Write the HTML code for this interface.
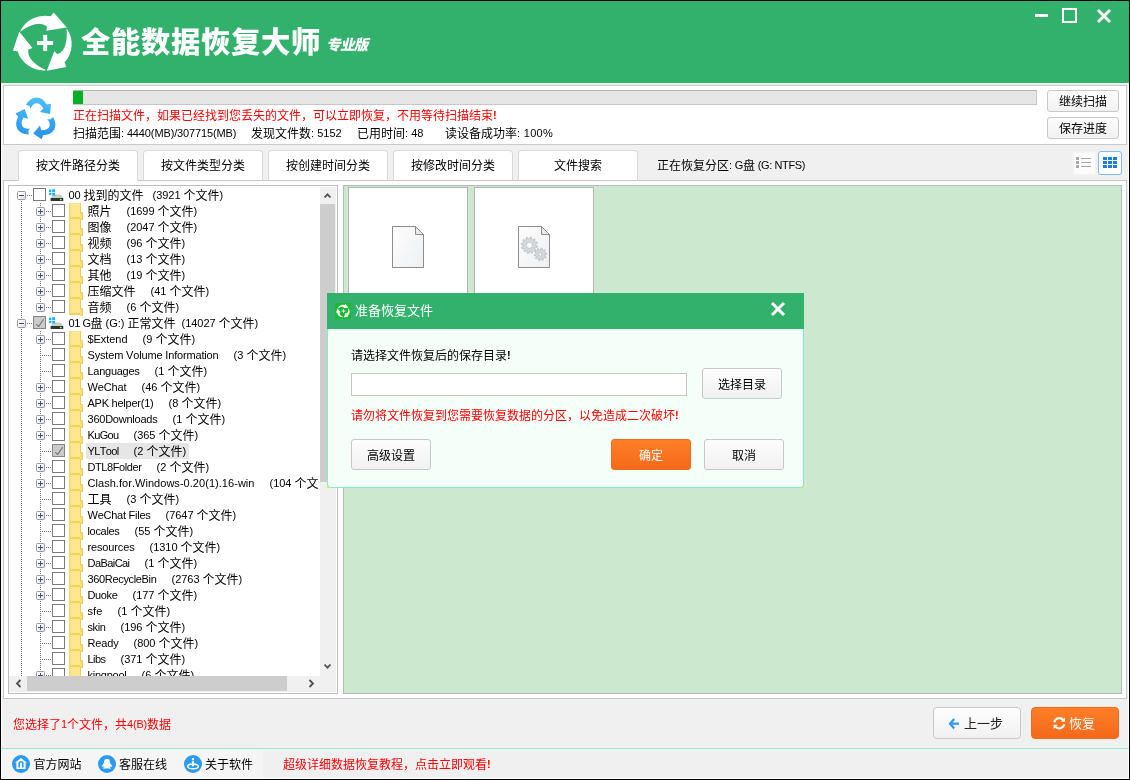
<!DOCTYPE html><html lang="zh-CN"><head><meta charset="utf-8"><title>全能数据恢复大师</title><style>
*{box-sizing:border-box;margin:0;padding:0}
html,body{width:1130px;height:780px;overflow:hidden;background:#f0f0f0}
body{position:relative;font-family:"Liberation Sans","Noto Sans CJK SC",sans-serif;font-size:12px;color:#000;line-height:1}
.abs,.abs>*{position:absolute}
#win{will-change:transform;position:absolute;left:0;top:0;width:1130px;height:780px;background:#f0f0f0;overflow:hidden}
#frame{position:absolute;left:0;top:0;width:1130px;height:780px;border:1px solid #000;z-index:50;pointer-events:none}
#frame2{position:absolute;left:1px;top:83px;width:1128px;height:696px;border:1px solid #fff;border-top:none;z-index:1;pointer-events:none}
#hdr{position:absolute;left:1px;top:1px;width:1128px;height:82px;background:#32b16c}
#title{position:absolute;left:80.5px;top:21.5px;height:42px;line-height:42px;font-size:29px;font-weight:900;color:#fff;white-space:nowrap;letter-spacing:0.7px;transform:scaleX(1.01);transform-origin:0 0;will-change:transform;opacity:.999}
#edition{position:absolute;left:326px;top:36px;height:18px;line-height:18px;font-size:14.5px;letter-spacing:-0.6px;font-weight:900;font-style:italic;color:#fff;white-space:nowrap}
#scan{position:absolute;left:3px;top:85px;width:1124px;height:60px;background:#fff;border:1px solid #c9c9c9}
#pbar{position:absolute;left:73px;top:90px;width:964px;height:15px;background:#e6e6e6;border:1px solid #c6c6c6;border-top-color:#b4b4b4}
#pfill{position:absolute;left:73px;top:91px;width:10px;height:13px;background:#06b025}
.t{position:absolute;white-space:pre;height:16px;line-height:16px;font-size:12px}
.red{color:#f00}
.l{font-size:11px;white-space:pre;font-kerning:none;font-variant-ligatures:none;position:relative;top:-1px;font-family:"Liberation Sans",sans-serif}
.btn{position:absolute;border:1px solid #c8c8c8;border-radius:3px;background:linear-gradient(#fdfdfd,#f1f1f1);text-align:center;font-size:12px;white-space:nowrap}
.tab{position:absolute;top:150px;width:120px;height:31px;border:1px solid #d9d9d9;border-radius:4px 4px 0 0;background:#fff;text-align:center;line-height:31px;font-size:12px;white-space:nowrap}
.tab{border-bottom-color:#c6c6c6}
.tab.sel{border-bottom-color:#fff}
#box{position:absolute;left:3px;top:180px;width:1124px;height:519px;background:#fff;border:1px solid #c6c6c6}
#tree{position:absolute;left:8px;top:185px;width:330px;height:509px;background:#fff;border:1px solid #bdbdbd;overflow:hidden}
#right{position:absolute;left:343px;top:185px;width:779px;height:509px;background:#cce8cf;border:1px solid #b3bdb5;overflow:hidden}
.tile{position:absolute;top:1px;width:120px;height:140px;background:#fff;border:1px solid #b4b4b4}
#sep{position:absolute;left:1px;top:748px;width:1128px;height:1px;background:#8df0d0;z-index:2}
#dlg{position:absolute;left:327px;top:293px;width:477px;height:195px;background:#f5fffa;border:1px solid #84ecca;border-top:none;border-radius:0 0 4px 4px;z-index:20}
#dlgt{position:absolute;left:327px;top:293px;width:477px;height:36px;background:#32b16c;z-index:21}
.z{z-index:22}
.orange{border:1px solid #f26a1b;background:linear-gradient(#ff7f27,#f4691a);color:#fff}
</style></head><body><div id="win">
<div id="hdr"></div>
<svg style="position:absolute;left:8px;top:8px" width="72" height="72" viewBox="-36.3 -35.4 72 72"><path transform="rotate(0)" d="M-24.3,-11.7 A27.5,27.5 0 0 1 6.5,-27.1 L9.4,-30.9 L22.5,-15.9 L1.9,-12.6 L2.8,-16.8 Q-6.05,-24.15 -24.3,-11.7 Z" fill="#fff"/><path transform="rotate(120)" d="M-24.3,-11.7 A27.5,27.5 0 0 1 6.5,-27.1 L9.4,-30.9 L22.5,-15.9 L1.9,-12.6 L2.8,-16.8 Q-6.05,-24.15 -24.3,-11.7 Z" fill="#fff"/><path transform="rotate(240)" d="M-24.3,-11.7 A27.5,27.5 0 0 1 6.5,-27.1 L9.4,-30.9 L22.5,-15.9 L1.9,-12.6 L2.8,-16.8 Q-6.05,-24.15 -24.3,-11.7 Z" fill="#fff"/><rect x="-7.2" y="-2.4" width="16" height="4" fill="#fff"/><rect x="-1.1" y="-8.5" width="4" height="16" fill="#fff"/></svg>
<div id="title">全能数据恢复大师</div><div id="edition">专业版</div>
<div style="position:absolute;left:1035px;top:14px;width:13px;height:3px;background:#fff"></div>
<div style="position:absolute;left:1062px;top:8px;width:15px;height:15px;border:2px solid #fff"></div>
<svg style="position:absolute;left:1096px;top:8px" width="16" height="16" viewBox="0 0 16 16"><path d="M2,2 L14,14 M14,2 L2,14" stroke="#fff" stroke-width="3" fill="none"/></svg>
<div id="scan"></div><div id="pbar"></div><div id="pfill"></div>
<svg style="position:absolute;left:12.1px;top:95px" width="48" height="48" viewBox="-23.6 -23.4 47.2 47.2"><defs><linearGradient id="rg" gradientUnits="userSpaceOnUse" x1="0" y1="-21" x2="0" y2="21"><stop offset="0" stop-color="#4bbff8"/><stop offset="1" stop-color="#2790eb"/></linearGradient></defs><path d="M-9.89,-13.75 Q-5.43,-20.82 0.52,-20.82 Q6.47,-20.82 10.56,-14.13 L14.65,-14.87 L13.90,-4.83 L3.87,-6.69 L7.21,-10.04 Q4.24,-15.24 0.52,-15.24 Q-3.20,-15.24 -5.43,-9.67 L-6.32,-12.49 Z" fill="url(#rg)"/><path d="M16.85,-1.69 Q20.75,5.71 17.77,10.86 Q14.80,16.01 6.96,16.21 L5.55,20.12 L-2.77,14.45 L3.86,6.70 L5.09,11.26 Q11.08,11.29 12.94,8.07 Q14.80,4.85 11.09,0.13 L13.98,0.77 Z" fill="url(#rg)"/><path d="M-6.96,15.44 Q-15.32,15.11 -18.29,9.96 Q-21.27,4.81 -17.52,-2.08 L-20.20,-5.25 L-11.13,-9.62 L-7.73,-0.01 L-12.30,-1.22 Q-15.32,3.95 -13.46,7.17 Q-11.60,10.39 -5.66,9.54 L-7.66,11.72 Z" fill="url(#rg)"/></svg>
<div class="t red" style="left:73px;top:108px">正在扫描文件，如果已经找到您丢失的文件，可以立即恢复，不用等待扫描结束<span class="l" style="font-weight:bold;letter-spacing:0.3px">!</span></div>
<div class="t" style="left:73px;top:126px">扫描范围<span class="l" style="letter-spacing:-0.126px">: 4440(MB)/307715(MB)     </span>发现文件数<span class="l" style="letter-spacing:0.012px">: 5152     </span>已用时间<span class="l" style="letter-spacing:0.024px">: 48       </span>读设备成功率<span class="l" style="letter-spacing:0.292px">: 100%</span></div>
<div class="btn" style="left:1047px;top:90px;width:72px;height:22px;line-height:22px">继续扫描</div>
<div class="btn" style="left:1047px;top:117px;width:72px;height:22px;line-height:22px">保存进度</div>
<div id="box"></div>
<div class="tab sel" style="left:18px">按文件路径分类</div>
<div class="tab" style="left:143px">按文件类型分类</div>
<div class="tab" style="left:268px">按创建时间分类</div>
<div class="tab" style="left:393px">按修改时间分类</div>
<div class="tab" style="left:518px">文件搜索</div>
<div class="t" style="left:657px;top:158px">正在恢复分区<span class="l" style="letter-spacing:-0.223px">: G</span>盘<span class="l" style="letter-spacing:-0.377px"> (G: NTFS)</span></div>
<div style="position:absolute;left:1073px;top:152px;width:23px;height:23px;background:#fbfbfb;border:1px solid #f4f4f4"></div>
<svg style="position:absolute;left:1076px;top:157px" width="16" height="12" viewBox="0 0 16 12"><rect x="0" y="0" width="3" height="3" fill="#a9a9a9"/><rect x="0" y="4" width="3" height="3" fill="#a9a9a9"/><rect x="0" y="8" width="3" height="3" fill="#a9a9a9"/><rect x="5" y="1" width="10" height="1" fill="#a9a9a9"/><rect x="5" y="5" width="10" height="1" fill="#a9a9a9"/><rect x="5" y="9" width="10" height="1" fill="#a9a9a9"/></svg>
<div style="position:absolute;left:1098px;top:151px;width:24px;height:24px;background:#fff;border:1px solid #7fbcf3;border-radius:3px"></div>
<svg style="position:absolute;left:1103px;top:157px" width="14" height="11" viewBox="0 0 14 11"><rect x="0" y="0" width="4" height="3" fill="#1b7fdc"/><rect x="5" y="0" width="4" height="3" fill="#1b7fdc"/><rect x="10" y="0" width="4" height="3" fill="#1b7fdc"/><rect x="0" y="4" width="4" height="3" fill="#1b7fdc"/><rect x="5" y="4" width="4" height="3" fill="#1b7fdc"/><rect x="10" y="4" width="4" height="3" fill="#1b7fdc"/><rect x="0" y="8" width="4" height="3" fill="#1b7fdc"/><rect x="5" y="8" width="4" height="3" fill="#1b7fdc"/><rect x="10" y="8" width="4" height="3" fill="#1b7fdc"/></svg>
<div id="tree"><div style="position:absolute;left:0;top:0;width:310px;height:490px;overflow:hidden"><style>.r{position:absolute;left:0;width:311px;height:16px}.cb{position:absolute;top:2px;width:13px;height:13px;border:1px solid #7a7a7a;background:#fff}.cb.g{background:#cbcbcb;border-color:#858585}.ex{position:absolute;top:5px;width:9px;height:9px;border:1px solid #9a9a9a;border-radius:1.5px;background:linear-gradient(135deg,#fff 25%,#dcdde6)}.ex i{position:absolute;left:1px;top:3px;width:5px;height:1px;background:#3a489c}.ex b{position:absolute;left:3px;top:1px;width:1px;height:5px;background:#3a489c}.fo{position:absolute;left:60px;top:1px;width:12px;height:16px;background:linear-gradient(90deg,#f3d056 0,#f6d970 1px,#fde690 2px,#fde791 10.5px,#f1cf52 11px,#f1cf52 12px);border-bottom:2px solid #f3d25c}.fo:after{content:"";position:absolute;left:11px;top:9px;width:1.6px;height:7px;background:#f9dd7a;border:1px solid #e8d050;border-left:none;border-bottom:none;border-radius:0 2px 0 0}.lb{position:absolute;top:2px;height:16px;line-height:16px;white-space:pre;font-size:12px}.hd{position:absolute;top:0;height:1px;background-image:linear-gradient(90deg,#6e6e6e 50%,transparent 50%);background-size:2px 1px}.vd{position:absolute;width:1px;background-image:linear-gradient(#6e6e6e 50%,transparent 50%);background-size:1px 2px}</style><div class="vd" style="left:12px;top:15px;height:500px"></div><div class="vd" style="left:31px;top:17px;height:100px"></div><div class="vd" style="left:31px;top:145px;height:400px"></div><div class="r" style="top:0px"><div class="hd" style="left:18px;top:9px;width:6px"></div><div class="ex" style="left:8px"><i></i></div><div class="cb" style="left:24px"></div><svg style="position:absolute;left:39.5px;top:3.3px" width="16" height="13" viewBox="0 0 16 13"><path d="M4.4,5.4 L12.2,5.4 L14.3,9 L1.6,9 Z" fill="#c9cbcd"/><rect x="1.6" y="9" width="12.7" height="3.1" rx="0.6" fill="#2d3630"/><rect x="10.8" y="9.9" width="1.8" height="1.3" fill="#7cf07c"/><rect x="0" y="0.6" width="2.3" height="2.4" fill="#0cb4f0"/><rect x="3.2" y="0.3" width="2.9" height="2.7" fill="#0cb4f0"/><rect x="0" y="3.8" width="2.3" height="2.3" fill="#0cb4f0"/><rect x="3.2" y="3.8" width="2.9" height="2.7" fill="#0cb4f0"/></svg><div class="lb" style="left:59.5px"><span class="l" style="letter-spacing:-0.097px">00 </span>找到的文件<span style="display:inline-block;width:9px"></span><span class="l" style="letter-spacing:-0.032px">(3921 </span>个文件<span class="l" style="letter-spacing:0.337px">)</span></div></div><div class="r" style="top:16px"><div class="hd" style="left:37px;top:9px;width:6px"></div><div class="ex" style="left:27px"><i></i><b></b></div><div class="cb" style="left:43px"></div><div class="fo"></div><div class="lb" style="left:78.5px">照片<span style="display:inline-block;width:15px"></span><span class="l" style="letter-spacing:-0.032px">(1699 </span>个文件<span class="l" style="letter-spacing:0.337px">)</span></div></div><div class="r" style="top:32px"><div class="hd" style="left:37px;top:9px;width:6px"></div><div class="ex" style="left:27px"><i></i><b></b></div><div class="cb" style="left:43px"></div><div class="fo"></div><div class="lb" style="left:78.5px">图像<span style="display:inline-block;width:15px"></span><span class="l" style="letter-spacing:-0.032px">(2047 </span>个文件<span class="l" style="letter-spacing:0.337px">)</span></div></div><div class="r" style="top:48px"><div class="hd" style="left:37px;top:9px;width:6px"></div><div class="ex" style="left:27px"><i></i><b></b></div><div class="cb" style="left:43px"></div><div class="fo"></div><div class="lb" style="left:78.5px">视频<span style="display:inline-block;width:15px"></span><span class="l" style="letter-spacing:0.011px">(96 </span>个文件<span class="l" style="letter-spacing:0.337px">)</span></div></div><div class="r" style="top:64px"><div class="hd" style="left:37px;top:9px;width:6px"></div><div class="ex" style="left:27px"><i></i><b></b></div><div class="cb" style="left:43px"></div><div class="fo"></div><div class="lb" style="left:78.5px">文档<span style="display:inline-block;width:15px"></span><span class="l" style="letter-spacing:0.011px">(13 </span>个文件<span class="l" style="letter-spacing:0.337px">)</span></div></div><div class="r" style="top:80px"><div class="hd" style="left:37px;top:9px;width:6px"></div><div class="ex" style="left:27px"><i></i><b></b></div><div class="cb" style="left:43px"></div><div class="fo"></div><div class="lb" style="left:78.5px">其他<span style="display:inline-block;width:15px"></span><span class="l" style="letter-spacing:0.011px">(19 </span>个文件<span class="l" style="letter-spacing:0.337px">)</span></div></div><div class="r" style="top:96px"><div class="hd" style="left:37px;top:9px;width:6px"></div><div class="ex" style="left:27px"><i></i><b></b></div><div class="cb" style="left:43px"></div><div class="fo"></div><div class="lb" style="left:78.5px">压缩文件<span style="display:inline-block;width:15px"></span><span class="l" style="letter-spacing:0.011px">(41 </span>个文件<span class="l" style="letter-spacing:0.337px">)</span></div></div><div class="r" style="top:112px"><div class="hd" style="left:37px;top:9px;width:6px"></div><div class="ex" style="left:27px"><i></i><b></b></div><div class="cb" style="left:43px"></div><div class="fo"></div><div class="lb" style="left:78.5px">音频<span style="display:inline-block;width:15px"></span><span class="l" style="letter-spacing:0.054px">(6 </span>个文件<span class="l" style="letter-spacing:0.337px">)</span></div></div><div class="r" style="top:128px"><div class="hd" style="left:18px;top:9px;width:6px"></div><div class="ex" style="left:8px"><i></i></div><div class="cb g" style="left:24px"><svg style="position:absolute;left:-1px;top:-1px" width="13" height="13" viewBox="0 0 13 13"><path d="M3.2,8.2 L5.7,10.4 L10.6,3.3" fill="none" stroke="#767676" stroke-width="1.1"/></svg></div><svg style="position:absolute;left:39.5px;top:3.3px" width="16" height="13" viewBox="0 0 16 13"><path d="M4.4,5.4 L12.2,5.4 L14.3,9 L1.6,9 Z" fill="#c9cbcd"/><rect x="1.6" y="9" width="12.7" height="3.1" rx="0.6" fill="#2d3630"/><rect x="10.8" y="9.9" width="1.8" height="1.3" fill="#7cf07c"/><rect x="0" y="0.6" width="2.3" height="2.4" fill="#0cb4f0"/><rect x="3.2" y="0.3" width="2.9" height="2.7" fill="#0cb4f0"/><rect x="0" y="3.8" width="2.3" height="2.3" fill="#0cb4f0"/><rect x="3.2" y="3.8" width="2.9" height="2.7" fill="#0cb4f0"/></svg><div class="lb" style="left:59.5px"><span class="l" style="letter-spacing:-0.462px">01 G</span>盘<span class="l" style="letter-spacing:-0.008px"> (G:) </span>正常文件<span style="display:inline-block;width:6px"></span><span class="l" style="letter-spacing:-0.044px">(14027 </span>个文件<span class="l" style="letter-spacing:0.337px">)</span></div></div><div class="r" style="top:144px"><div class="hd" style="left:37px;top:9px;width:6px"></div><div class="ex" style="left:27px"><i></i><b></b></div><div class="cb" style="left:43px"></div><div class="fo"></div><div class="lb" style="left:78.5px"><span class="l" style="letter-spacing:-0.052px">$Extend</span><span style="display:inline-block;width:15px"></span><span class="l" style="letter-spacing:0.054px">(9 </span>个文件<span class="l" style="letter-spacing:0.337px">)</span></div></div><div class="r" style="top:160px"><div class="hd" style="left:33px;top:9px;width:10px"></div><div class="cb" style="left:43px"></div><div class="fo"></div><div class="lb" style="left:78.5px"><span class="l" style="letter-spacing:-0.164px">System Volume Information</span><span style="display:inline-block;width:15px"></span><span class="l" style="letter-spacing:0.054px">(3 </span>个文件<span class="l" style="letter-spacing:0.337px">)</span></div></div><div class="r" style="top:176px"><div class="hd" style="left:33px;top:9px;width:10px"></div><div class="cb" style="left:43px"></div><div class="fo"></div><div class="lb" style="left:78.5px"><span class="l" style="letter-spacing:-0.271px">Languages</span><span style="display:inline-block;width:15px"></span><span class="l" style="letter-spacing:0.054px">(1 </span>个文件<span class="l" style="letter-spacing:0.337px">)</span></div></div><div class="r" style="top:192px"><div class="hd" style="left:37px;top:9px;width:6px"></div><div class="ex" style="left:27px"><i></i><b></b></div><div class="cb" style="left:43px"></div><div class="fo"></div><div class="lb" style="left:78.5px"><span class="l" style="letter-spacing:-0.123px">WeChat</span><span style="display:inline-block;width:15px"></span><span class="l" style="letter-spacing:0.011px">(46 </span>个文件<span class="l" style="letter-spacing:0.337px">)</span></div></div><div class="r" style="top:208px"><div class="hd" style="left:37px;top:9px;width:6px"></div><div class="ex" style="left:27px"><i></i><b></b></div><div class="cb" style="left:43px"></div><div class="fo"></div><div class="lb" style="left:78.5px"><span class="l" style="letter-spacing:-0.238px">APK helper(1)</span><span style="display:inline-block;width:15px"></span><span class="l" style="letter-spacing:0.054px">(8 </span>个文件<span class="l" style="letter-spacing:0.337px">)</span></div></div><div class="r" style="top:224px"><div class="hd" style="left:37px;top:9px;width:6px"></div><div class="ex" style="left:27px"><i></i><b></b></div><div class="cb" style="left:43px"></div><div class="fo"></div><div class="lb" style="left:78.5px"><span class="l" style="letter-spacing:-0.231px">360Downloads</span><span style="display:inline-block;width:15px"></span><span class="l" style="letter-spacing:0.054px">(1 </span>个文件<span class="l" style="letter-spacing:0.337px">)</span></div></div><div class="r" style="top:240px"><div class="hd" style="left:37px;top:9px;width:6px"></div><div class="ex" style="left:27px"><i></i><b></b></div><div class="cb" style="left:43px"></div><div class="fo"></div><div class="lb" style="left:78.5px"><span class="l" style="letter-spacing:-0.649px">KuGou</span><span style="display:inline-block;width:15px"></span><span class="l" style="letter-spacing:-0.014px">(365 </span>个文件<span class="l" style="letter-spacing:0.337px">)</span></div></div><div class="r" style="top:256px"><div class="hd" style="left:33px;top:9px;width:10px"></div><div class="cb g" style="left:43px"><svg style="position:absolute;left:-1px;top:-1px" width="13" height="13" viewBox="0 0 13 13"><path d="M3.2,8.2 L5.7,10.4 L10.6,3.3" fill="none" stroke="#767676" stroke-width="1.1"/></svg></div><div class="fo"></div><div style="position:absolute;left:77px;top:1px;width:103px;height:16px;background:#e6e6e6"></div><div class="lb" style="left:78.5px"><span class="l" style="letter-spacing:-0.642px">YLTool</span><span style="display:inline-block;width:15px"></span><span class="l" style="letter-spacing:0.054px">(2 </span>个文件<span class="l" style="letter-spacing:0.337px">)</span></div></div><div class="r" style="top:272px"><div class="hd" style="left:37px;top:9px;width:6px"></div><div class="ex" style="left:27px"><i></i><b></b></div><div class="cb" style="left:43px"></div><div class="fo"></div><div class="lb" style="left:78.5px"><span class="l" style="letter-spacing:-0.408px">DTL8Folder</span><span style="display:inline-block;width:15px"></span><span class="l" style="letter-spacing:0.054px">(2 </span>个文件<span class="l" style="letter-spacing:0.337px">)</span></div></div><div class="r" style="top:288px"><div class="hd" style="left:37px;top:9px;width:6px"></div><div class="ex" style="left:27px"><i></i><b></b></div><div class="cb" style="left:43px"></div><div class="fo"></div><div class="lb" style="left:78.5px"><span class="l" style="letter-spacing:0.042px">Clash.for.Windows-0.20(1).16-win</span><span style="display:inline-block;width:15px"></span><span class="l" style="letter-spacing:-0.014px">(104 </span>个文件<span class="l" style="letter-spacing:0.337px">)</span></div></div><div class="r" style="top:304px"><div class="hd" style="left:33px;top:9px;width:10px"></div><div class="cb" style="left:43px"></div><div class="fo"></div><div class="lb" style="left:78.5px">工具<span style="display:inline-block;width:15px"></span><span class="l" style="letter-spacing:0.054px">(3 </span>个文件<span class="l" style="letter-spacing:0.337px">)</span></div></div><div class="r" style="top:320px"><div class="hd" style="left:37px;top:9px;width:6px"></div><div class="ex" style="left:27px"><i></i><b></b></div><div class="cb" style="left:43px"></div><div class="fo"></div><div class="lb" style="left:78.5px"><span class="l" style="letter-spacing:-0.251px">WeChat Files</span><span style="display:inline-block;width:15px"></span><span class="l" style="letter-spacing:-0.032px">(7647 </span>个文件<span class="l" style="letter-spacing:0.337px">)</span></div></div><div class="r" style="top:336px"><div class="hd" style="left:33px;top:9px;width:10px"></div><div class="cb" style="left:43px"></div><div class="fo"></div><div class="lb" style="left:78.5px"><span class="l" style="letter-spacing:-0.320px">locales</span><span style="display:inline-block;width:15px"></span><span class="l" style="letter-spacing:0.011px">(55 </span>个文件<span class="l" style="letter-spacing:0.337px">)</span></div></div><div class="r" style="top:352px"><div class="hd" style="left:37px;top:9px;width:6px"></div><div class="ex" style="left:27px"><i></i><b></b></div><div class="cb" style="left:43px"></div><div class="fo"></div><div class="lb" style="left:78.5px"><span class="l" style="letter-spacing:-0.144px">resources</span><span style="display:inline-block;width:15px"></span><span class="l" style="letter-spacing:-0.032px">(1310 </span>个文件<span class="l" style="letter-spacing:0.337px">)</span></div></div><div class="r" style="top:368px"><div class="hd" style="left:37px;top:9px;width:6px"></div><div class="ex" style="left:27px"><i></i><b></b></div><div class="cb" style="left:43px"></div><div class="fo"></div><div class="lb" style="left:78.5px"><span class="l" style="letter-spacing:-0.558px">DaBaiCai</span><span style="display:inline-block;width:15px"></span><span class="l" style="letter-spacing:0.054px">(1 </span>个文件<span class="l" style="letter-spacing:0.337px">)</span></div></div><div class="r" style="top:384px"><div class="hd" style="left:37px;top:9px;width:6px"></div><div class="ex" style="left:27px"><i></i><b></b></div><div class="cb" style="left:43px"></div><div class="fo"></div><div class="lb" style="left:78.5px"><span class="l" style="letter-spacing:-0.337px">360RecycleBin</span><span style="display:inline-block;width:15px"></span><span class="l" style="letter-spacing:-0.032px">(2763 </span>个文件<span class="l" style="letter-spacing:0.337px">)</span></div></div><div class="r" style="top:400px"><div class="hd" style="left:37px;top:9px;width:6px"></div><div class="ex" style="left:27px"><i></i><b></b></div><div class="cb" style="left:43px"></div><div class="fo"></div><div class="lb" style="left:78.5px"><span class="l" style="letter-spacing:-0.359px">Duoke</span><span style="display:inline-block;width:15px"></span><span class="l" style="letter-spacing:-0.014px">(177 </span>个文件<span class="l" style="letter-spacing:0.337px">)</span></div></div><div class="r" style="top:416px"><div class="hd" style="left:33px;top:9px;width:10px"></div><div class="cb" style="left:43px"></div><div class="fo"></div><div class="lb" style="left:78.5px"><span class="l" style="letter-spacing:0.109px">sfe</span><span style="display:inline-block;width:15px"></span><span class="l" style="letter-spacing:0.054px">(1 </span>个文件<span class="l" style="letter-spacing:0.337px">)</span></div></div><div class="r" style="top:432px"><div class="hd" style="left:37px;top:9px;width:6px"></div><div class="ex" style="left:27px"><i></i><b></b></div><div class="cb" style="left:43px"></div><div class="fo"></div><div class="lb" style="left:78.5px"><span class="l" style="letter-spacing:-0.390px">skin</span><span style="display:inline-block;width:15px"></span><span class="l" style="letter-spacing:-0.014px">(196 </span>个文件<span class="l" style="letter-spacing:0.337px">)</span></div></div><div class="r" style="top:448px"><div class="hd" style="left:33px;top:9px;width:10px"></div><div class="cb" style="left:43px"></div><div class="fo"></div><div class="lb" style="left:78.5px"><span class="l" style="letter-spacing:-0.159px">Ready</span><span style="display:inline-block;width:15px"></span><span class="l" style="letter-spacing:-0.014px">(800 </span>个文件<span class="l" style="letter-spacing:0.337px">)</span></div></div><div class="r" style="top:464px"><div class="hd" style="left:33px;top:9px;width:10px"></div><div class="cb" style="left:43px"></div><div class="fo"></div><div class="lb" style="left:78.5px"><span class="l" style="letter-spacing:-0.545px">Libs</span><span style="display:inline-block;width:15px"></span><span class="l" style="letter-spacing:-0.014px">(371 </span>个文件<span class="l" style="letter-spacing:0.337px">)</span></div></div><div class="r" style="top:480px"><div class="hd" style="left:37px;top:9px;width:6px"></div><div class="ex" style="left:27px"><i></i><b></b></div><div class="cb" style="left:43px"></div><div class="fo"></div><div class="lb" style="left:78.5px"><span class="l" style="letter-spacing:-0.247px">kingpool</span><span style="display:inline-block;width:15px"></span><span class="l" style="letter-spacing:0.054px">(6 </span>个文件<span class="l" style="letter-spacing:0.337px">)</span></div></div></div>
<div style="position:absolute;left:311px;top:1px;width:16px;height:505px;background:#f0f0f0"></div>
<div style="position:absolute;left:311px;top:18px;width:15px;height:278px;background:#cdcdcd"></div>
<svg style="position:absolute;left:314px;top:6px" width="9" height="7" viewBox="0 0 9 7"><path d="M1.5,5.5 L4.5,2.3 L7.5,5.5" fill="none" stroke="#505050" stroke-width="1.8"/></svg>
<svg style="position:absolute;left:314px;top:477px" width="9" height="7" viewBox="0 0 9 7"><path d="M1.5,1.5 L4.5,4.7 L7.5,1.5" fill="none" stroke="#505050" stroke-width="1.8"/></svg>
<div style="position:absolute;left:0;top:490px;width:327px;height:16px;background:#f0f0f0"></div>
<div style="position:absolute;left:18px;top:490px;width:260px;height:15px;background:#cdcdcd"></div>
<svg style="position:absolute;left:5.5px;top:493px" width="7" height="9" viewBox="0 0 7 9"><path d="M5.5,1 L2,4.5 L5.5,8" fill="none" stroke="#505050" stroke-width="1.8"/></svg>
<svg style="position:absolute;left:298.5px;top:493px" width="7" height="9" viewBox="0 0 7 9"><path d="M1.5,1 L5,4.5 L1.5,8" fill="none" stroke="#505050" stroke-width="1.8"/></svg>
</div>
<div id="right"><div class="tile" style="left:4px"></div><div class="tile" style="left:130px"></div><svg style="position:absolute;left:48px;top:40px" width="32" height="42" viewBox="0 0 32 42"><defs><linearGradient id="pga" x1="0" y1="0" x2="1" y2="1"><stop offset="0" stop-color="#fdfdfd"/><stop offset="1" stop-color="#eff0f2"/></linearGradient></defs><path d="M0.5,0.5 L23.5,0.5 L31.5,8.5 L31.5,41.5 L0.5,41.5 Z" fill="url(#pga)" stroke="#8d8d8d"/><path d="M23.5,0.5 L23.5,8.5 L31.5,8.5 Z" fill="#e9e9e9" stroke="#8d8d8d" stroke-linejoin="round"/></svg><svg style="position:absolute;left:174px;top:40px" width="32" height="42" viewBox="0 0 32 42"><defs><linearGradient id="pgb" x1="0" y1="0" x2="1" y2="1"><stop offset="0" stop-color="#fdfdfd"/><stop offset="1" stop-color="#eff0f2"/></linearGradient></defs><path d="M0.5,0.5 L23.5,0.5 L31.5,8.5 L31.5,41.5 L0.5,41.5 Z" fill="url(#pgb)" stroke="#8d8d8d"/><path d="M23.5,0.5 L23.5,8.5 L31.5,8.5 Z" fill="#e9e9e9" stroke="#8d8d8d" stroke-linejoin="round"/><path d="M17.80,19.30 L19.66,20.08 L19.42,21.45 L17.40,21.53 L16.94,22.50 L18.17,24.11 L17.27,25.17 L15.48,24.23 L14.60,24.84 L14.86,26.85 L13.55,27.32 L12.47,25.61 L11.40,25.70 L10.62,27.56 L9.25,27.32 L9.17,25.30 L8.20,24.84 L6.59,26.07 L5.53,25.17 L6.47,23.38 L5.86,22.50 L3.85,22.76 L3.38,21.45 L5.09,20.37 L5.00,19.30 L3.14,18.52 L3.38,17.15 L5.40,17.07 L5.86,16.10 L4.63,14.49 L5.53,13.43 L7.32,14.37 L8.20,13.76 L7.94,11.75 L9.25,11.28 L10.33,12.99 L11.40,12.90 L12.18,11.04 L13.55,11.28 L13.63,13.30 L14.60,13.76 L16.21,12.53 L17.27,13.43 L16.33,15.22 L16.94,16.10 L18.95,15.84 L19.42,17.15 L17.71,18.23 Z" fill="#d3d8dc" stroke="#b4bbc1" stroke-width="0.7"/><circle cx="11.4" cy="19.3" r="3" fill="#fbfbfc" stroke="#b4bbc1" stroke-width="0.7"/><path d="M26.79,29.76 L28.17,30.93 L27.55,32.03 L25.84,31.46 L25.16,32.08 L25.58,33.84 L24.43,34.36 L23.38,32.89 L22.47,33.00 L21.78,34.67 L20.54,34.42 L20.55,32.61 L19.75,32.16 L18.21,33.11 L17.36,32.17 L18.43,30.72 L18.05,29.88 L16.25,29.75 L16.10,28.49 L17.82,27.95 L18.01,27.04 L16.63,25.87 L17.25,24.77 L18.96,25.34 L19.64,24.72 L19.22,22.96 L20.37,22.44 L21.42,23.91 L22.33,23.80 L23.02,22.13 L24.26,22.38 L24.25,24.19 L25.05,24.64 L26.59,23.69 L27.44,24.63 L26.37,26.08 L26.75,26.92 L28.55,27.05 L28.70,28.31 L26.98,28.85 Z" fill="#d3d8dc" stroke="#b4bbc1" stroke-width="0.7"/><circle cx="22.4" cy="28.4" r="1.5" fill="#fbfbfc" stroke="#b4bbc1" stroke-width="0.7"/></svg></div>
<div class="t red" style="left:13px;top:717px">您选择了<span class="l" style="letter-spacing:-0.118px">1</span>个文件，共<span class="l" style="letter-spacing:-0.195px">4(B)</span>数据</div>
<div class="btn" style="left:933px;top:707px;width:88px;height:32px;line-height:32px;font-size:13px;text-align:left;padding-left:30px;color:#222;border-radius:4px">上一步</div>
<svg style="position:absolute;left:948px;top:717px" width="12" height="13" viewBox="0 0 12 13"><path d="M6.2,2 L2,6.7 L6.2,11.4 M2.5,6.7 L11,6.7" fill="none" stroke="#2d9bf0" stroke-width="2.2"/></svg>
<div class="btn orange" style="left:1031px;top:707px;width:88px;height:32px;line-height:32px;font-size:13px;text-align:left;padding-left:37px;border-radius:4px">恢复</div>
<svg style="position:absolute;left:1051.8px;top:716.4px" width="14.6" height="14.6" viewBox="0 0 14 14"><path d="M2.2,6 A5,5 0 0 1 11,4" fill="none" stroke="#fff" stroke-width="2"/><path d="M11.8,8 A5,5 0 0 1 3,10" fill="none" stroke="#fff" stroke-width="2"/><path d="M12.5,1.5 L12.5,5.5 L8.5,5.5 Z" fill="#fff"/><path d="M1.5,12.5 L1.5,8.5 L5.5,8.5 Z" fill="#fff"/></svg>
<div id="sep"></div>
<div style="position:absolute;left:2px;top:750px;width:261px;height:28px;background:#f5f5f5"></div><svg style="position:absolute;left:12px;top:755px" width="18" height="18" viewBox="-9 -9 18 18"><circle r="9" fill="#2b9af3"/><path d="M0,-6.1 L6,-1.3 L4.6,-1.3 L4.6,4.9 L-4.6,4.9 L-4.6,-1.3 L-6,-1.3 Z" fill="#fff"/><path d="M-2.6,3.4 L-2.6,-0.4 A2.6,2.6 0 0 1 2.6,-0.4 L2.6,3.4 L1,3.4 L1,-0.4 A1,1 0 0 0 -1,-0.4 L-1,3.4 Z" fill="#2b9af3"/></svg><div class="t" style="left:33.5px;top:757px">官方网站</div><svg style="position:absolute;left:98px;top:755px" width="18" height="18" viewBox="-9 -9 18 18"><circle r="9" fill="#2b9af3"/><path d="M0,-5.2 C-2.4,-5.2 -3.1,-3 -3.1,-1.2 C-3.6,0 -5.2,1.4 -5.3,3 L-3.3,2.2 L-3.6,4.9 L-0.6,4.3 L0,4.9 L0.6,4.3 L3.6,4.9 L3.3,2.2 L5.3,3 C5.2,1.4 3.6,0 3.1,-1.2 C3.1,-3 2.4,-5.2 0,-5.2 Z" fill="#f2f8fe"/></svg><div class="t" style="left:119px;top:757px">客服在线</div><svg style="position:absolute;left:184px;top:755px" width="18" height="18" viewBox="-9 -9 18 18"><circle r="9" fill="#2b9af3"/><rect x="-1.1" y="-6" width="2.2" height="2.2" fill="#fff"/><rect x="-1.1" y="-2.9" width="2.2" height="5.2" fill="#fff"/><ellipse cx="0" cy="2.4" rx="5.3" ry="2.3" fill="none" stroke="#fff" stroke-width="1.5"/><rect x="-1.1" y="-0.5" width="2.2" height="2.5" fill="#fff"/></svg><div class="t" style="left:205px;top:757px">关于软件</div><div class="t red" style="left:283px;top:757px">超级详细数据恢复教程，点击立即观看<span class="l" style="font-weight:bold;letter-spacing:0.3px">!</span></div>
<div style="position:absolute;left:327px;top:486px;width:2px;height:2px;background:#f4f000;z-index:19"></div><div style="position:absolute;left:802px;top:486px;width:2px;height:2px;background:#f4f000;z-index:19"></div>
<div id="dlg"></div><div id="dlgt"></div>
<div class="z" style="position:absolute;left:335px;top:303px;width:16px;height:16px;background:#1bb834"></div>
<svg class="z" style="position:absolute;left:336.0px;top:304.2px" width="13.6" height="13.6" viewBox="-31.6 -31.2 59.4 59.4"><path transform="rotate(0)" d="M-24.3,-11.7 A27.5,27.5 0 0 1 6.5,-27.1 L9.4,-30.9 L22.5,-15.9 L1.9,-12.6 L2.8,-16.8 Q-6.05,-24.15 -24.3,-11.7 Z" fill="#fff"/><path transform="rotate(120)" d="M-24.3,-11.7 A27.5,27.5 0 0 1 6.5,-27.1 L9.4,-30.9 L22.5,-15.9 L1.9,-12.6 L2.8,-16.8 Q-6.05,-24.15 -24.3,-11.7 Z" fill="#fff"/><path transform="rotate(240)" d="M-24.3,-11.7 A27.5,27.5 0 0 1 6.5,-27.1 L9.4,-30.9 L22.5,-15.9 L1.9,-12.6 L2.8,-16.8 Q-6.05,-24.15 -24.3,-11.7 Z" fill="#fff"/><rect x="-7.2" y="-2.4" width="16" height="4" fill="#fff"/><rect x="-1.1" y="-8.5" width="4" height="16" fill="#fff"/></svg>
<div class="t z" style="left:355px;top:303px;color:#fff;font-size:13px">准备恢复文件</div>
<svg class="z" style="position:absolute;left:770px;top:301px" width="16" height="16" viewBox="0 0 16 16"><path d="M2,2 L14,14 M14,2 L2,14" stroke="#fff" stroke-width="3" fill="none"/></svg>
<div class="t z" style="left:351px;top:348px">请选择文件恢复后的保存目录<span class="l" style="font-weight:bold;letter-spacing:0.3px">!</span></div>
<div class="z" style="position:absolute;left:351px;top:373px;width:336px;height:23px;background:#fff;border:1px solid #c4c4c4"></div>
<div class="btn z" style="left:702px;top:368px;width:80px;height:31px;line-height:32px">选择目录</div>
<div class="t red z" style="left:351px;top:408px">请勿将文件恢复到您需要恢复数据的分区，以免造成二次破坏<span class="l" style="font-weight:bold;letter-spacing:0.3px">!</span></div>
<div class="btn z" style="left:351px;top:439px;width:80px;height:31px;line-height:32px">高级设置</div>
<div class="btn orange z" style="left:611px;top:439px;width:80px;height:31px;line-height:32px">确定</div>
<div class="btn z" style="left:704px;top:439px;width:80px;height:31px;line-height:32px">取消</div>
<div id="frame2"></div></div><div id="frame"></div></body></html>
